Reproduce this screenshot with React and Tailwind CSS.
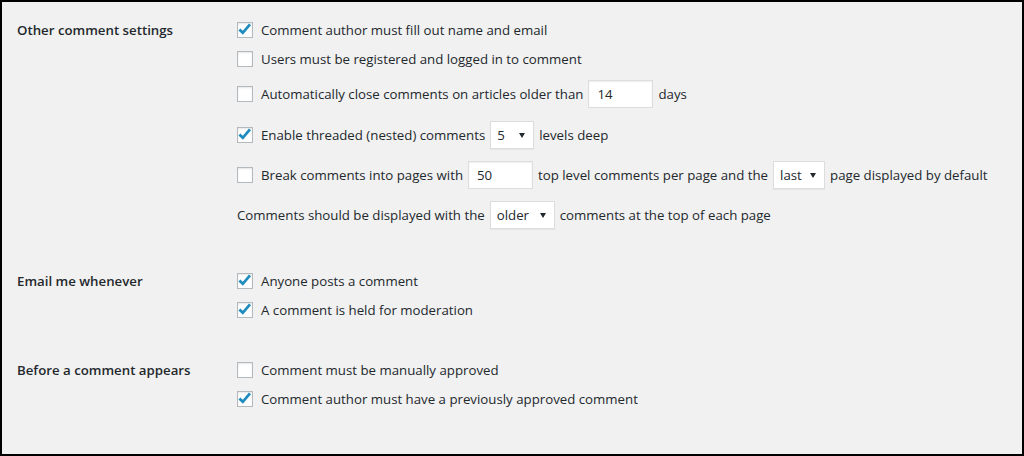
import React from 'react';

const Checkbox = ({ checked }) => (
  <span className="w-4 h-4 shrink-0 bg-white border border-[#b4b9be] shadow-[inset_0_1px_2px_rgba(0,0,0,0.1)] flex items-center justify-center">
    {checked && (
      <svg width="16" height="16" viewBox="0 0 16 16" className="shrink-0">
        <polyline points="2.4,7.4 5.8,10.8 13,2.4" fill="none" stroke="#1e8cbe" strokeWidth="2.8" />
      </svg>
    )}
  </span>
);

const TextInput = ({ value, width }) => (
  <span
    className={`h-7 ${width} shrink-0 bg-white border border-[#dddddd] shadow-[inset_0_1px_2px_rgba(0,0,0,0.07)] flex items-center px-2 mx-[5px]`}
  >
    <span className="translate-y-px">{value}</span>
  </span>
);

const Select = ({ value, width }) => (
  <span
    className={`h-7 ${width} shrink-0 bg-white border border-[#dddddd] shadow-[0_1px_1px_rgba(0,0,0,0.04)] flex items-center justify-between pl-[6px] pr-[8px] mx-[5px]`}
  >
    <span className="translate-y-px">{value}</span>
    <svg width="6" height="5" viewBox="0 0 6 5">
      <polygon points="0,0 6,0 3,5" fill="#23282d" />
    </svg>
  </span>
);

const Text = ({ children, className = '' }) => (
  <span className={`whitespace-nowrap translate-y-px ${className}`}>{children}</span>
);

const CheckRow = ({ checked, children, className = '' }) => (
  <div className={`flex items-center h-4 ${className}`}>
    <Checkbox checked={checked} />
    <Text className="ml-2">{children}</Text>
  </div>
);

const Section = ({ label, children }) => (
  <div className="flex">
    <div className="w-[219px] h-4 flex items-center font-semibold whitespace-nowrap -ml-px">
      <span className="translate-y-px">{label}</span>
    </div>
    <div className="flex flex-col ml-px">{children}</div>
  </div>
);

export default function App() {
  return (
    <div className="w-[1024px] h-[456px] border-2 border-black bg-[#f1f1f1] pt-5 pl-4 font-['Open_Sans','Noto_Sans',sans-serif] text-[13.25px] text-[#23282d] overflow-hidden">
      <div className="flex flex-col gap-[44px]">
        <Section label="Other comment settings">
          <CheckRow checked>Comment author must fill out name and email</CheckRow>
          <CheckRow className="mt-[13px]">Users must be registered and logged in to comment</CheckRow>
          <div className="flex items-center h-7 mt-[13px]">
            <Checkbox />
            <Text className="ml-2">Automatically close comments on articles older than</Text>
            <TextInput value="14" width="w-[65px]" />
            <Text>days</Text>
          </div>
          <div className="flex items-center h-7 mt-[13px]">
            <Checkbox checked />
            <Text className="ml-2">Enable threaded (nested) comments</Text>
            <Select value="5" width="w-[44px]" />
            <Text>levels deep</Text>
          </div>
          <div className="flex items-center h-7 mt-[12px]">
            <Checkbox />
            <Text className="ml-2">Break comments into pages with</Text>
            <TextInput value="50" width="w-[65px]" />
            <Text>top level comments per page and the</Text>
            <Select value="last" width="w-[52px]" />
            <Text>page displayed by default</Text>
          </div>
          <div className="flex items-center h-7 mt-[12px]">
            <Text>Comments should be displayed with the</Text>
            <Select value="older" width="w-[65px]" />
            <Text>comments at the top of each page</Text>
          </div>
        </Section>

        <Section label="Email me whenever">
          <CheckRow checked>Anyone posts a comment</CheckRow>
          <CheckRow checked className="mt-[13px]">A comment is held for moderation</CheckRow>
        </Section>

        <Section label="Before a comment appears">
          <CheckRow>Comment must be manually approved</CheckRow>
          <CheckRow checked className="mt-[13px]">Comment author must have a previously approved comment</CheckRow>
        </Section>
      </div>
    </div>
  );
}
